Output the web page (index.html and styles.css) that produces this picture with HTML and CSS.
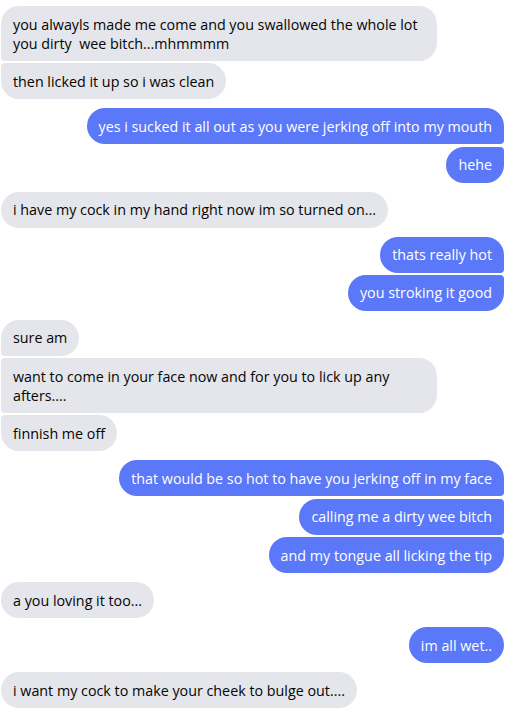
FILE: index.html
```html
<!DOCTYPE html>
<html>
<head>
<meta charset="utf-8">
<link rel="stylesheet" href="styles.css">
</head>
<body>
<div class="chat">
  <div class="group in">
    <div class="msg">you alwayls made me come and you swallowed the whole lot you dirty &nbsp;wee bitch...mhmmmm</div>
    <div class="msg">then licked it up so i was clean</div>
  </div>
  <div class="group out">
    <div class="msg">yes i sucked it all out as you were jerking off into my mouth</div>
    <div class="msg">hehe</div>
  </div>
  <div class="group in">
    <div class="msg">i have my cock in my hand right now im so turned on...</div>
  </div>
  <div class="group out">
    <div class="msg">thats really hot</div>
    <div class="msg">you stroking it good</div>
  </div>
  <div class="group in">
    <div class="msg">sure am</div>
    <div class="msg">want to come in your face now and for you to lick up any afters....</div>
    <div class="msg">finnish me off</div>
  </div>
  <div class="group out">
    <div class="msg">that would be so hot to have you jerking off in my face</div>
    <div class="msg">calling me a dirty wee bitch</div>
    <div class="msg">and my tongue all licking the tip</div>
  </div>
  <div class="group in">
    <div class="msg">a you loving it too...</div>
  </div>
  <div class="group out">
    <div class="msg">im all wet..</div>
  </div>
  <div class="group in">
    <div class="msg">i want my cock to make your cheek to bulge out....</div>
  </div>
</div>
</body>
</html>
```

FILE: styles.css
```css
html, body {
  margin: 0;
  padding: 0;
  background: #ffffff;
}
.chat {
  display: flex;
  flex-direction: column;
  gap: 9px;
  padding: 6px 17px 0 1px;
  font-family: "Open Sans", "Noto Sans", sans-serif;
  font-size: 14.3px;
  line-height: 19px;
}
.group {
  display: flex;
  flex-direction: column;
  gap: 2.3px;
}
.group.in { align-items: flex-start; }
.group.out { align-items: flex-end; }
.msg {
  max-width: 436px;
  padding: 8.5px 12px;
  border-radius: 18px;
  box-sizing: border-box;
}
.in .msg {
  background: #e4e6eb;
  color: #050505;
}
.out .msg {
  background: #5a78f8;
  color: #ffffff;
}
.in .msg:not(:first-child) { border-top-left-radius: 4px; }
.in .msg:not(:last-child) { border-bottom-left-radius: 4px; }
.out .msg:not(:first-child) { border-top-right-radius: 4px; }
.out .msg:not(:last-child) { border-bottom-right-radius: 4px; }
```
